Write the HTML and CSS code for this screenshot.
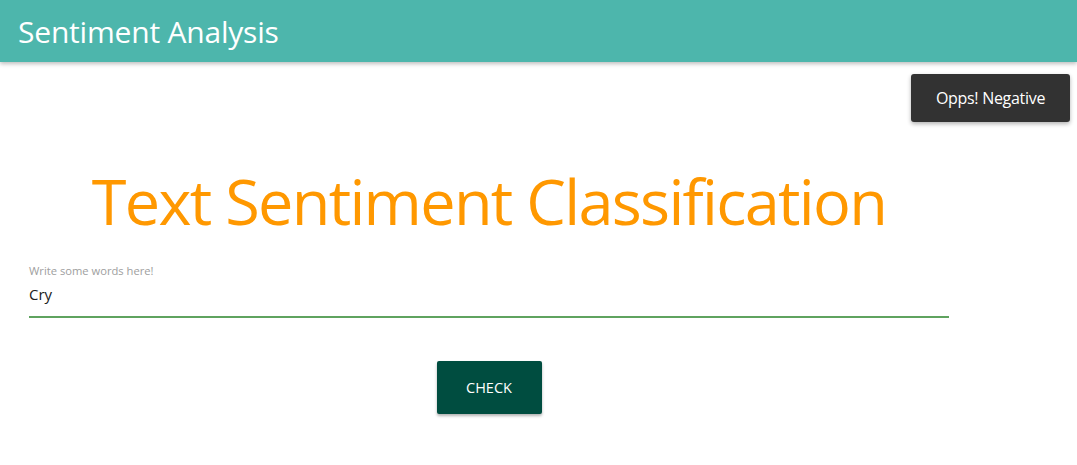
FILE: index.html
```html
<!DOCTYPE html>
<html>
<head>
<meta charset="utf-8">
<link rel="stylesheet" href="styles.css">
</head>
<body>
<header class="appbar"><h1 class="appbar-title">Sentiment Analysis</h1></header>
<div class="toast">Opps! Negative</div>
<main class="content">
  <h2 class="headline">Text Sentiment Classification</h2>
  <div class="field">
    <label class="field-label">Write some words here!</label>
    <div class="field-input">Cry</div>
  </div>
  <div class="actions"><button class="btn">CHECK</button></div>
</main>
</body>
</html>
```
FILE: styles.css
```css
* { box-sizing: border-box; }
body { margin: 0; font-family: "Open Sans", "Noto Sans", sans-serif; background: #fff; width: 1077px; height: 465px; overflow: hidden; position: relative; }
.appbar { height: 62px; background: #4db6ac; box-shadow: 0 2px 4px rgba(0,0,0,0.25); display: flex; align-items: center; padding-left: 18px; }
.appbar-title { margin: 0; font-weight: 400; font-size: 30px; color: #fff; letter-spacing: -0.2px; }
.toast { position: absolute; top: 74px; left: 911px; width: 159px; height: 48px; background: #323232; color: #fff; border-radius: 3px; font-size: 16px; display: flex; align-items: center; justify-content: center; box-shadow: 0 2px 4px rgba(0,0,0,0.3); letter-spacing: -0.3px; }
.content { width: 920px; margin-left: 29px; padding-top: 100px; display: flex; flex-direction: column; }
.headline { margin: 0; text-align: center; font-weight: 400; color: #ff9800; font-size: 63px; line-height: 78px; letter-spacing: -1.7px; }
.field { margin-top: 24px; display: flex; flex-direction: column; }
.field-label { font-size: 11.2px; color: #9e9e9e; line-height: 14px; }
.field-input { font-size: 15px; color: #212121; line-height: 20px; padding: 6px 0 12px; border-bottom: 2px solid #5fa35f; }
.actions { display: flex; justify-content: center; margin-top: 43px; }
.btn { width: 105px; height: 53px; border: none; border-radius: 2px; background: #004d40; color: #fff; font-family: inherit; font-size: 14.5px; box-shadow: 0 2px 3px rgba(0,0,0,0.3); }
```
